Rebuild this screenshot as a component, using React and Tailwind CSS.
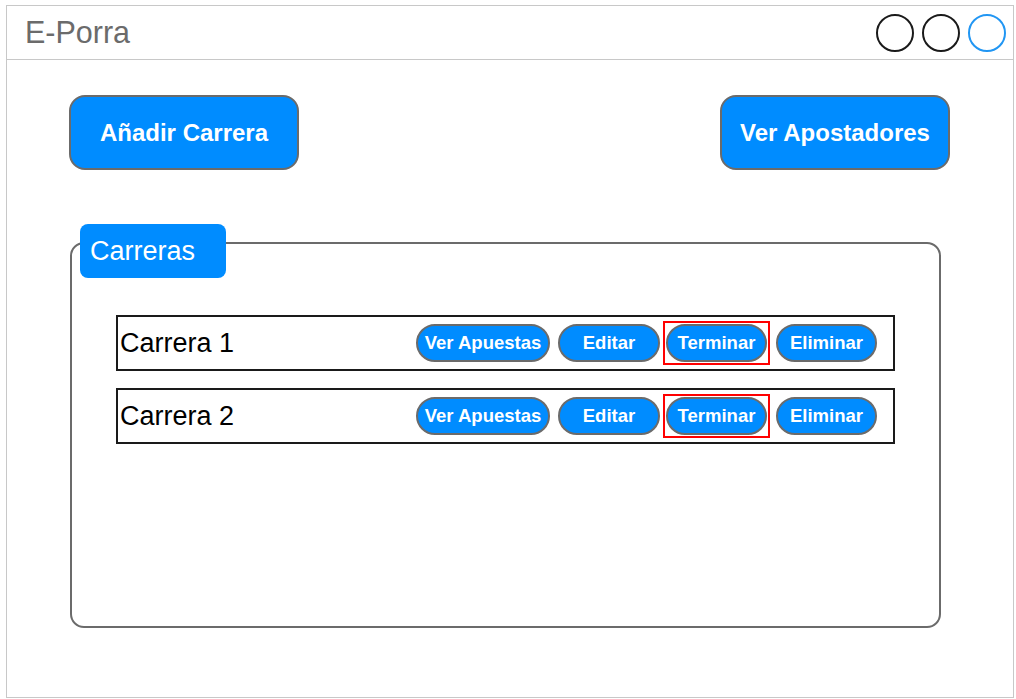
import React from 'react';

const races = ['Carrera 1', 'Carrera 2'];

function PillButton({ children, className = '' }) {
  return (
    <button
      className={`h-[38px] rounded-full border-2 border-[#6b6b6b] bg-[#008cff] text-white font-bold text-[18.5px] leading-none ${className}`}
    >
      {children}
    </button>
  );
}

export default function App() {
  return (
    <div
      className="w-[1016px] h-[699px] bg-white pt-[5px] pl-[6px]"
      style={{ fontFamily: '"Liberation Sans", Arial, sans-serif' }}
    >
      <div className="w-[1008px] h-[693px] border border-[#c8c8c8] flex flex-col">
        {/* header */}
        <div className="h-[54px] border-b border-[#c8c8c8] flex items-center justify-between pl-[18px] pr-[7px]">
          <span className="text-[30.5px] text-[#6b6b6b] leading-none">E-Porra</span>
          <div className="flex items-center gap-[8px] pt-[1px]">
            <span className="w-[38px] h-[38px] rounded-full border-2 border-[#1a1a1a]" />
            <span className="w-[38px] h-[38px] rounded-full border-2 border-[#1a1a1a]" />
            <span className="w-[38px] h-[38px] rounded-full border-2 border-[#2196f3]" />
          </div>
        </div>

        <div className="flex flex-col pt-[35px]">
          {/* top actions */}
          <div className="flex justify-between pl-[62px] pr-[63px]">
            <button className="w-[230px] h-[75px] rounded-[16px] border-2 border-[#6b6b6b] bg-[#008cff] text-white font-bold text-[24px]">
              Añadir Carrera
            </button>
            <button className="w-[230px] h-[75px] rounded-[16px] border-2 border-[#6b6b6b] bg-[#008cff] text-white font-bold text-[24px]">
              Ver Apostadores
            </button>
          </div>

          {/* panel */}
          <div className="relative ml-[63px] mt-[72px] w-[871px] h-[386px] border-2 border-[#6b6b6b] rounded-[14px] pt-[71px] pl-[44px]">
            <div className="absolute -top-[20px] left-[8px] w-[146px] h-[54px] rounded-[8px] bg-[#008cff] flex items-center pl-[10px]">
              <span className="text-white text-[27px]">Carreras</span>
            </div>

            <div className="flex flex-col gap-[17px]">
              {races.map((name) => (
                <div
                  key={name}
                  className="w-[779px] h-[56px] border-2 border-[#1a1a1a] flex items-center pl-[2px] pr-[16px]"
                >
                  <span className="text-[27px] text-black flex-1">{name}</span>
                  <PillButton className="w-[134px]">Ver Apuestas</PillButton>
                  <PillButton className="w-[102px] ml-[8px]">Editar</PillButton>
                  <span className="ml-[3px] border-2 border-[#ff0000] p-[1px] flex">
                    <PillButton className="w-[101px]">Terminar</PillButton>
                  </span>
                  <PillButton className="w-[101px] ml-[6px]">Eliminar</PillButton>
                </div>
              ))}
            </div>
          </div>
        </div>
      </div>
    </div>
  );
}
